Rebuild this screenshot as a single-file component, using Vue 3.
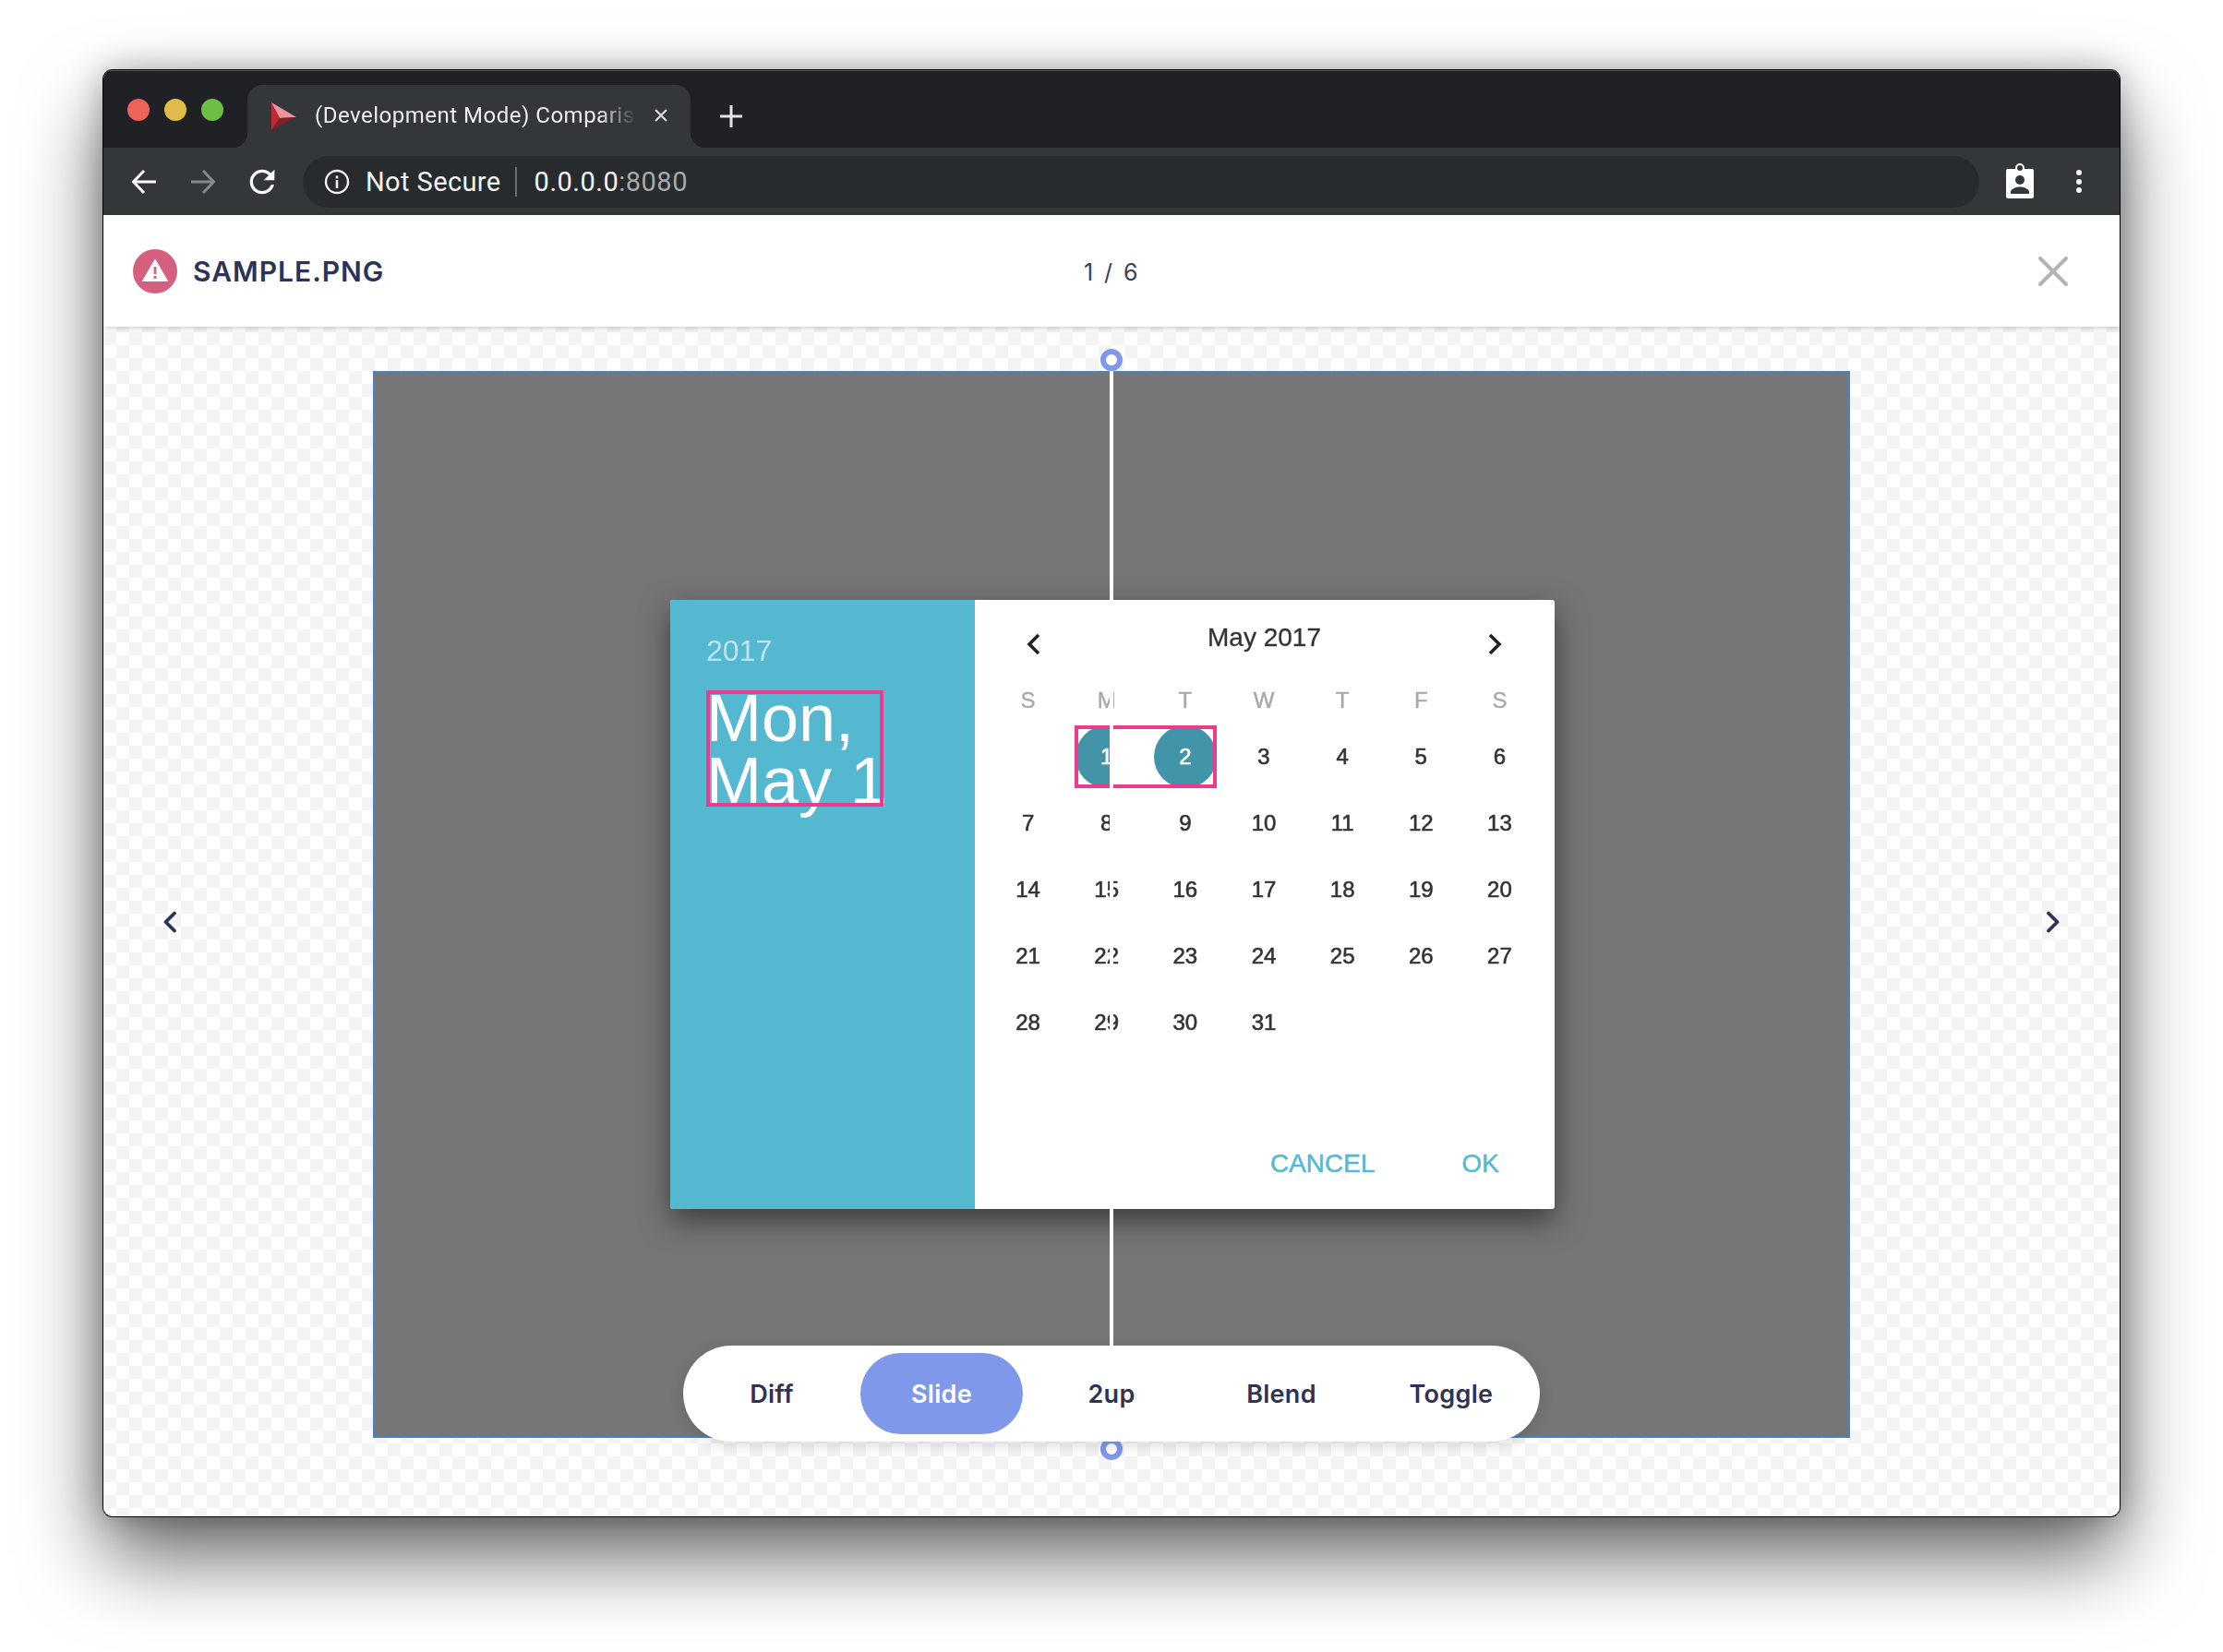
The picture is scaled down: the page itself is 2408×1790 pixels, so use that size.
<template>
  <div class="page">
    <div class="window">
      <!-- browser chrome -->
      <div class="tabstrip">
        <div class="lights">
          <span class="light red"></span>
          <span class="light yellow"></span>
          <span class="light green"></span>
        </div>
        <div class="tab">
          <svg class="favicon" width="27" height="30" viewBox="0 0 27 30">
            <polygon points="0,0 9,17 0,30" fill="#c12a2c" />
            <polygon points="0,0 27,16 9,17" fill="#e9969f" />
            <polygon points="9,17 27,16 0,30" fill="#7d2029" />
          </svg>
          <span class="tab-title">(Development Mode) Comparis</span>
          <svg class="tab-close" width="16" height="16" viewBox="0 0 16 16">
            <path d="M2 2l12 12M14 2L2 14" stroke="#d5d7d9" stroke-width="2.4" fill="none" />
          </svg>
        </div>
        <svg class="newtab" width="24" height="24" viewBox="0 0 24 24">
          <path d="M12 0v24M0 12h24" stroke="#e4e5e6" stroke-width="3" fill="none" />
        </svg>
      </div>

      <div class="toolbar">
        <svg class="tool" width="28" height="28" viewBox="0 0 28 28">
          <path d="M27 14H3M14 2L2.5 14 14 26" stroke="#fff" stroke-width="3" fill="none" />
        </svg>
        <svg class="tool fwd" width="28" height="28" viewBox="0 0 28 28">
          <path d="M1 14h24M14 2l11.5 12L14 26" stroke="#85888b" stroke-width="3" fill="none" />
        </svg>
        <svg class="tool reload" width="40" height="40" viewBox="0 0 24 24">
          <path fill="#fff" d="M17.65 6.35C16.2 4.9 14.21 4 12 4c-4.42 0-7.99 3.58-7.99 8s3.57 8 7.99 8c3.73 0 6.84-2.55 7.73-6h-2.08c-.82 2.33-3.04 4-5.65 4-3.31 0-6-2.69-6-6s2.69-6 6-6c1.66 0 3.14.69 4.22 1.78L13 11h7V4l-2.35 2.35z" />
        </svg>
        <div class="omnibox">
          <svg class="info" width="28" height="28" viewBox="0 0 28 28">
            <circle cx="14" cy="14" r="12" stroke="#f1f1f1" stroke-width="2.4" fill="none" />
            <rect x="12.7" y="12" width="2.6" height="9" fill="#f1f1f1" />
            <rect x="12.7" y="7.5" width="2.6" height="2.8" fill="#f1f1f1" />
          </svg>
          <span class="secure">Not Secure</span>
          <span class="sep"></span>
          <span class="url">0.0.0.0<span class="port">:8080</span></span>
        </div>
        <svg class="badge" width="30" height="38" viewBox="0 0 30 38">
          <rect x="0" y="6" width="30" height="32" rx="2" fill="#fff" />
          <circle cx="15" cy="5" r="4" fill="#33373a" stroke="#fff" stroke-width="2" />
          <circle cx="15" cy="18" r="5" fill="#33373a" />
          <path d="M5 33v-2c0-3.4 6-5.4 10-5.4s10 2 10 5.4v2z" fill="#33373a" />
        </svg>
        <div class="dots"><i></i><i></i><i></i></div>
      </div>

      <!-- viewer header -->
      <header class="head">
        <div class="file">
          <svg width="48" height="48" viewBox="0 0 48 48">
            <circle cx="24" cy="24" r="24" fill="#d55f7e" />
            <path d="M24 11L37.5 34.5h-27z" fill="#fff" stroke="#fff" stroke-width="1" stroke-linejoin="round" />
            <rect x="22.6" y="19" width="2.8" height="8" fill="#d55f7e" />
            <rect x="22.6" y="29" width="2.8" height="3" fill="#d55f7e" />
          </svg>
          <span class="filename">SAMPLE.PNG</span>
        </div>
        <div class="count">1 / 6</div>
        <svg class="close" width="32" height="32" viewBox="0 0 32 32">
          <path d="M2 2l28 28M30 2L2 30" stroke="#b3b3b3" stroke-width="4" stroke-linecap="round" fill="none" />
        </svg>
      </header>

      <!-- comparison area -->
      <main class="viewer">
        <svg class="nav" width="16" height="24" viewBox="0 0 16 24">
          <path d="M13 2.5L3.5 12l9.5 9.5" stroke="#2c3357" stroke-width="3.8" stroke-linecap="round" stroke-linejoin="round" fill="none" />
        </svg>

        <div class="stage">
          <div class="dialog">
            <div class="side">
              <div class="year soft">2017</div>
              <div class="date"><span class="soft">Mon,<br />May 1</span></div>
            </div>
            <div class="cal">
              <div class="cal-head soft">
                <svg width="20" height="26" viewBox="0 0 20 26">
                  <path d="M16 3L6 13l10 10" stroke="#222" stroke-width="3.6" fill="none" />
                </svg>
                <span class="month">May 2017</span>
                <svg width="20" height="26" viewBox="0 0 20 26">
                  <path d="M4 3l10 10L4 23" stroke="#222" stroke-width="3.6" fill="none" />
                </svg>
              </div>
              <div class="weekdays soft">
                <span v-for="(d, i) in weekdays" :key="i">{{ d }}</span>
              </div>
              <div class="days">
                <span
                  v-for="(d, i) in days"
                  :key="i"
                  class="day soft"
                >
                  <b v-if="d === 1" class="sel half">1</b>
                  <b v-else-if="d === 2" class="sel">2</b>
                  <template v-else>{{ d }}</template>
                </span>
                <div class="mark"></div>
              </div>
              <div class="actions soft">
                <span>CANCEL</span>
                <span>OK</span>
              </div>
            </div>
          </div>

          <div class="slider-line"></div>
          <div class="handle top"></div>
          <div class="handle bottom"></div>

          <div class="modes">
            <button v-for="m in modes" :key="m" class="mode" :class="{ active: m === 'Slide' }">{{ m }}</button>
          </div>
        </div>

        <svg class="nav" width="16" height="24" viewBox="0 0 16 24">
          <path d="M3 2.5L12.5 12 3 21.5" stroke="#2c3357" stroke-width="3.8" stroke-linecap="round" stroke-linejoin="round" fill="none" />
        </svg>
      </main>
    </div>
  </div>
</template>

<script setup>
const weekdays = ['S', 'M', 'T', 'W', 'T', 'F', 'S']
const days = ['', ...Array.from({ length: 31 }, (_, i) => i + 1)]
const modes = ['Diff', 'Slide', '2up', 'Blend', 'Toggle']
</script>

<style>
html, body { margin: 0; background: #fff; }
</style>

<style scoped>
.page{width:2408px;height:1790px;padding:76px 0 0 112px;box-sizing:border-box;background:#fff;overflow:hidden}
.window{width:2184px;height:1567px;display:flex;flex-direction:column;border-radius:10px;overflow:hidden;box-shadow:0 0 0 1px #000,0 44px 88px rgba(0,0,0,.6),0 0 36px rgba(0,0,0,.28)}

/* chrome */
.tabstrip{height:84px;flex:none;background:#202124;display:flex;align-items:flex-end;box-shadow:inset 0 1px #55575a}
.lights{display:flex;gap:16px;width:156px;box-sizing:border-box;padding:0 0 29px 26px;align-self:flex-end}
.light{width:24px;height:24px;border-radius:50%}
.red{background:#ee6259}
.yellow{background:#dfbc4a}
.green{background:#6cbe47}
.tab{position:relative;width:480px;height:68px;box-sizing:border-box;background:#33373a;border-radius:16px 16px 0 0;display:flex;align-items:center;padding:0 0 2px 26px;color:#eceded;font:24px Roboto,sans-serif;letter-spacing:.5px}
.tab::before,.tab::after{content:"";position:absolute;bottom:0;width:16px;height:16px}
.tab::before{left:-16px;background:radial-gradient(circle at 0 0,transparent 16px,#33373a 16.5px)}
.tab::after{right:-16px;background:radial-gradient(circle at 100% 0,transparent 16px,#33373a 16.5px)}
.favicon{flex:none;margin-top:2px}
.tab-title{margin-left:20px;width:349px;white-space:nowrap;-webkit-mask-image:linear-gradient(90deg,#000 88%,transparent);mask-image:linear-gradient(90deg,#000 88%,transparent)}
.tab-close{margin-left:18px;flex:none}
.newtab{margin:0 0 22px 32px;flex:none}

.toolbar{height:73px;flex:none;background:#33373a;display:flex;align-items:center;padding-left:30px;box-sizing:border-box}
.tool{flex:none;margin-right:36px}
.toolbar .fwd{margin-right:30px}
.toolbar .reload{margin-right:24px}
.omnibox{width:1816px;height:56px;flex:none;border-radius:28px;background:#282b2e;display:flex;align-items:center;box-sizing:border-box;padding-left:23px;font:29px Roboto,sans-serif;letter-spacing:.4px;color:#f3f3f3}
.secure{margin-left:17px;white-space:nowrap}
.sep{width:2px;height:32px;background:#6c6f71;margin:0 19px 0 15px}
.url{white-space:nowrap;letter-spacing:.5px}
.port{color:#a7a9ab}
.badge{flex:none;margin:-2px 0 0 29px}
.dots{display:flex;flex-direction:column;gap:3.5px;margin-left:46px}
.dots i{width:6px;height:6px;border-radius:50%;background:#f4f4f4}

/* header */
.head{position:relative;z-index:2;height:121px;flex:none;background:#fff;display:grid;grid-template-columns:1fr auto 1fr;align-items:center;padding:0 32px;box-shadow:0 2px 6px rgba(0,0,0,.18)}
.file{display:flex;align-items:center;gap:17px}
.filename{font:600 30px Inter,sans-serif;letter-spacing:1px;color:#2c3357;white-space:nowrap}
.count{font:25px Inter,sans-serif;color:#3a3f58;letter-spacing:2.5px;margin:2px 0 0 1px}
.close{justify-self:end;margin-right:24px}

/* viewer */
.viewer{flex:1;display:flex;align-items:center;justify-content:space-between;padding:0 64px;background:conic-gradient(#f4f4f4 25%,#fff 0 50%,#f4f4f4 0 75%,#fff 0) 14px 6px/28px 28px}
.nav{flex:none}
.stage{position:relative;align-self:flex-start;margin-top:48px;width:1600px;height:1156px;box-sizing:border-box;border:2px solid #4a80c4;background:#767676;display:flex;align-items:center;justify-content:center}

.dialog{width:958px;height:660px;margin-left:2px;display:flex;background:#fff;border-radius:3px;box-shadow:0 12px 32px rgba(0,0,0,.5);font-family:"Liberation Sans",Arial,sans-serif}
.soft{filter:blur(.5px)}
.side{width:330px;flex:none;box-sizing:border-box;background:#54b8d1;padding:35px 0 0 39px;border-radius:3px 0 0 3px}
.year{font-size:32px;line-height:40px;color:rgba(255,255,255,.62)}
.date{position:relative;width:192px;height:126px;margin-top:19px;font-size:72px;line-height:68px;color:#fff;white-space:nowrap}
.date span{display:block}
.date::after{content:"";position:absolute;top:4px;left:0;right:0;height:118px;border:4px solid #ee3a8c}

.cal{flex:1;display:flex;flex-direction:column;padding:0 17px 0 15px;min-width:0}
.cal-head{height:84px;display:flex;align-items:center;justify-content:space-between;padding:0 37px 0 38px;flex:none}
.cal-head svg{margin-top:12px;flex:none}
.month{font-size:28px;color:#333;margin-top:-2px;-webkit-text-stroke:.3px #333}
.weekdays{height:50px;flex:none;display:grid;grid-template-columns:repeat(7,1fr);align-items:center;text-align:center;font-size:24px;color:#a8a8a8;-webkit-text-stroke:.4px #a8a8a8}
.days{position:relative;display:grid;grid-template-columns:repeat(7,1fr);grid-auto-rows:72px;flex:none}
.day{display:flex;align-items:center;justify-content:center;font-size:24px;color:#333;-webkit-text-stroke:.6px #333}
.sel{width:68px;height:68px;flex:none;border-radius:50%;background:#4295a8;color:#fff;-webkit-text-stroke:.6px #fff;display:flex;align-items:center;justify-content:center;font-weight:400}
.half{clip-path:inset(0 30px 0 0)}
.mark{position:absolute;left:93px;top:2px;width:154px;height:68px;box-sizing:border-box;border:4px solid #ee3a8c}
.actions{margin-top:auto;height:100px;display:flex;align-items:flex-start;justify-content:flex-end;gap:94px;padding-right:43px;box-sizing:border-box;font-size:28px;color:#55bad3;-webkit-text-stroke:.5px #55bad3;flex:none}
.actions span{line-height:32px;margin-top:35px}

.slider-line{position:absolute;top:-2px;bottom:-2px;left:calc(50% - 2px);width:4px;background:#fff;z-index:3}
.handle{position:absolute;left:calc(50% - 12px);width:24px;height:24px;box-sizing:border-box;border-radius:50%;border:6px solid #7f98e9;background:#fff;z-index:3}
.handle.top{top:-26px}
.handle.bottom{bottom:-26px}

.modes{position:absolute;z-index:4;left:50%;bottom:-6px;transform:translateX(-50%);width:928px;height:104px;box-sizing:border-box;padding:8px;background:#fff;border-radius:52px;display:flex;gap:8px;box-shadow:0 4px 16px rgba(0,0,0,.14)}
.mode{flex:1;border:0;border-radius:44px;background:transparent;color:#2c3357;font:600 27px Inter,sans-serif;letter-spacing:.3px;padding:0}
.mode.active{background:#7f98e9;color:#fff}
</style>
